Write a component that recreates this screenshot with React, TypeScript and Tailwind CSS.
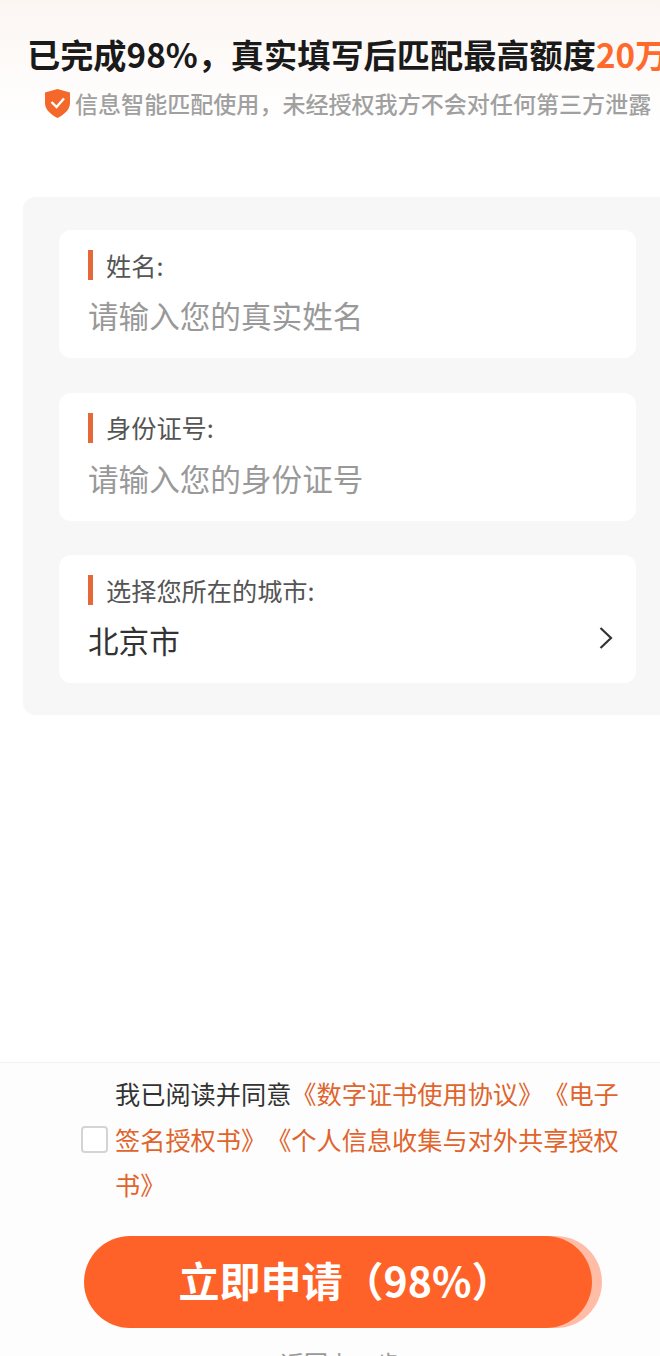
const FONT = "font-['Noto_Sans_CJK_SC','Noto_Sans',sans-serif]"

function Field({ label, value, placeholder }: { label: string; value?: string; placeholder?: string }) {
  return (
    <div className="flex h-[128px] shrink-0 flex-col rounded-[12px] bg-white pl-[29px] pr-[22px] pt-[20px]">
      <div className="flex h-[30px] items-center gap-[13px]">
        <div className="h-[30px] w-[5px] bg-[#e4683a]" />
        <span className="pb-[1px] text-[25.2px] leading-[30px] text-[#555555]">{label}</span>
      </div>
      <div className="mt-[11px] flex h-[50px] items-center justify-between">
        {placeholder ? (
          <span className="text-[30.6px] text-[#999999]">{placeholder}</span>
        ) : (
          <span className="text-[30.6px] text-[#333333]">{value}</span>
        )}
        {value && (
          <svg className="mb-[6px]" width="16" height="24" viewBox="0 0 16 24" fill="none" stroke="#333333" strokeWidth="2.2">
            <path d="M2.5 2 L13 12 L2.5 22" />
          </svg>
        )}
      </div>
    </div>
  )
}

export default function App() {
  return (
    <div className={`flex h-[1356px] w-[660px] flex-col overflow-hidden bg-white ${FONT}`}>
      {/* 顶部提示 */}
      <div className="h-[197px] shrink-0 bg-gradient-to-b from-[#fcf6f3] to-white to-[125px] pt-[31px]">
        <div className="whitespace-nowrap pl-[27px] text-[33.2px] font-semibold leading-[46px] text-[#1a1a1a]">
          已完成98%，真实填写后匹配最高额度<span className="text-[#ff6a2c]">20万</span>
        </div>
        <div className="mt-[11px] flex items-center gap-[4px] pl-[44px]">
          <svg width="27" height="30" viewBox="0 0 27 30">
            <path d="M13.5 1 L26 4.5 V15 C26 22 20 26.5 13.5 30 C7 26.5 1 22 1 15 V4.5 Z" fill="#f4682c" />
            <path d="M7.5 14 L12.5 19 L20 10.5" fill="none" stroke="#ffffff" strokeWidth="2.4" />
          </svg>
          <span className="whitespace-nowrap text-[23.05px] font-medium leading-[30px] text-[#a0a0a0]">
            信息智能匹配使用，未经授权我方不会对任何第三方泄露
          </span>
        </div>
      </div>

      {/* 表单 */}
      <div className="ml-[23px] flex shrink-0 flex-col gap-[34.5px] rounded-l-[12px] bg-[#f7f7f7] pb-[32px] pl-[36px] pr-[24px] pt-[33px]">
        <Field label="姓名:" placeholder="请输入您的真实姓名" />
        <Field label="身份证号:" placeholder="请输入您的身份证号" />
        <Field label="选择您所在的城市:" value="北京市" />
      </div>

      <div className="flex-1" />

      {/* 底部协议与按钮 */}
      <div className="flex h-[294px] shrink-0 flex-col border-t border-[#f2f2f2] bg-[#fdfdfd]">
        <div className="flex shrink-0 items-center pl-[81px] pr-[38px] pt-[8px]">
          <div className="h-[27px] w-[27px] shrink-0 rounded-[4px] border-2 border-[#d4d4d4] bg-white" />
          <p className="ml-[7px] text-[25.2px] leading-[45.5px] text-[#333333] [text-spacing-trim:space-all]">
            我已阅读并同意
            <span className="text-[#e0642c]">《数字证书使用协议》《电子签名授权书》《个人信息收集与对外共享授权书》</span>
          </p>
        </div>
        <div className="relative ml-[84px] mt-[28.5px] h-[92px] w-[518px] shrink-0">
          <div className="absolute bottom-0 right-0 top-0 w-[120px] rounded-full bg-[#ffbda8]" />
          <button className="absolute left-0 top-0 h-[92px] w-[508px] rounded-full bg-[#ff6228] pb-[5px] pl-[15px] text-[41px] font-bold text-white [text-spacing-trim:space-all]">
            立即申请（98%）
          </button>
        </div>
        <div className="mt-[19px] shrink-0 pl-[20px] text-center text-[24px] leading-[32px] text-[#999999]">返回上一步</div>
      </div>
    </div>
  )
}
